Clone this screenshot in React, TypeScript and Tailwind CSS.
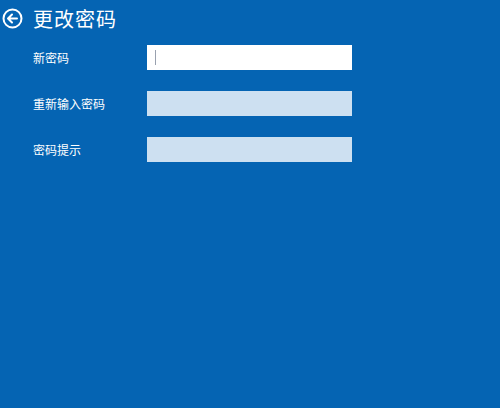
const font = { fontFamily: '"Noto Sans CJK SC", "Microsoft YaHei", sans-serif' };

function BackIcon() {
  return (
    <svg width="21" height="21" viewBox="0 0 21 21" fill="none">
      <circle cx="10.5" cy="10.5" r="9" stroke="white" strokeWidth="2" />
      <path d="M15 10.5H6.5M10 6.5l-4 4 4 4" stroke="white" strokeWidth="2" strokeLinecap="round" strokeLinejoin="round" />
    </svg>
  );
}

const rows = [
  { label: "新密码", active: true },
  { label: "重新输入密码", active: false },
  { label: "密码提示", active: false },
];

export default function App() {
  return (
    <div className="w-[500px] h-[408px] bg-[#0564b3] text-white overflow-hidden" style={font}>
      <div className="flex items-center h-[36px] pl-[2px] pt-[1px] gap-[10px]">
        <BackIcon />
        <h1 className="text-[20px] leading-none tracking-[1px]">更改密码</h1>
      </div>
      <div className="flex flex-col gap-[21px] mt-[9px]">
        {rows.map((r) => (
          <div key={r.label} className="flex items-center h-[25px]">
            <span className="w-[147px] pl-[33px] text-[12px] leading-none">{r.label}</span>
            <div
              className={
                r.active
                  ? "w-[205px] h-[25px] bg-white flex items-center pl-[8px]"
                  : "w-[205px] h-[25px] bg-[#cde0f1]"
              }
            >
              {r.active && <div className="w-px h-[15px] bg-gray-400" />}
            </div>
          </div>
        ))}
      </div>
    </div>
  );
}
